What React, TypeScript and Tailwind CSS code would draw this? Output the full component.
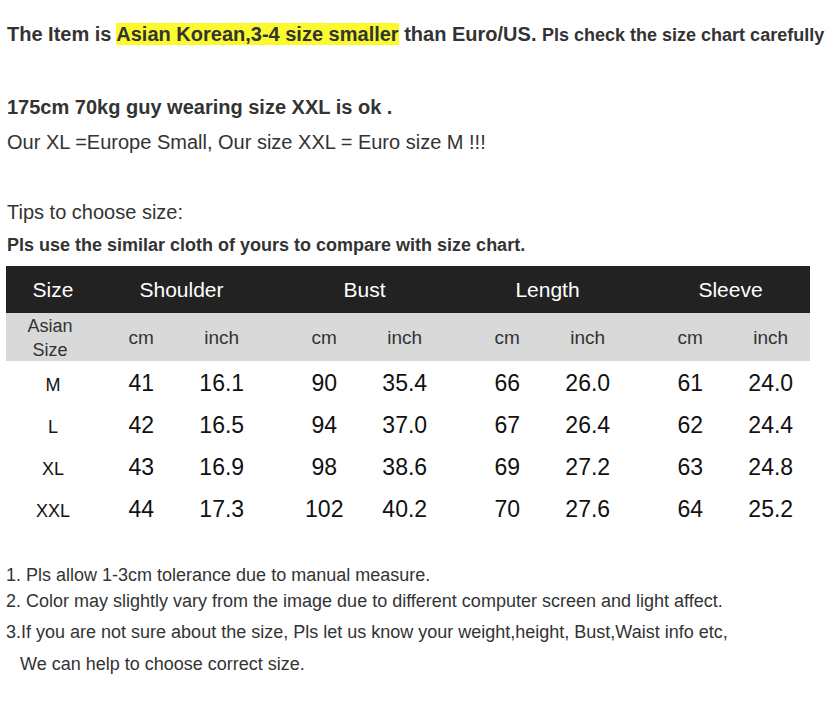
const rows = [
  ["M", "41", "16.1", "90", "35.4", "66", "26.0", "61", "24.0"],
  ["L", "42", "16.5", "94", "37.0", "67", "26.4", "62", "24.4"],
  ["XL", "43", "16.9", "98", "38.6", "69", "27.2", "63", "24.8"],
  ["XXL", "44", "17.3", "102", "40.2", "70", "27.6", "64", "25.2"],
];

const groups = ["Shoulder", "Bust", "Length", "Sleeve"];

// one row of the chart: size cell, then 4 measurement groups of cm / inch
function Row({ first, vals, className }: { first: React.ReactNode; vals: string[]; className: string }) {
  return (
    <div className={`flex w-[804px] overflow-hidden items-center ${className}`}>
      <div className="w-[84px] shrink-0 pl-[10px]">{first}</div>
      {[0, 1, 2, 3].map((g) => (
        <div key={g} className="w-[183px] shrink-0 grid grid-cols-2 px-[11px]">
          <span>{vals[g * 2]}</span>
          <span>{vals[g * 2 + 1]}</span>
        </div>
      ))}
    </div>
  );
}

export default function App() {
  return (
    <div className="w-[825px] h-[702px] bg-white text-[#333] font-['Liberation_Sans',Arial,sans-serif] overflow-hidden">
      <div className="pl-[7px] pt-[21px]">
        <p className="leading-[26px] font-bold text-[20px] whitespace-nowrap">
          The Item is <span className="bg-[#fafa2e]">Asian Korean,3-4 size smaller</span> than Euro/US.{" "}
          <span className="text-[18px]">Pls check the size chart carefully</span>
        </p>
        <p className="mt-[45px] leading-[28px] font-bold text-[20px]">175cm 70kg guy wearing size XXL is ok .</p>
        <p className="mt-[7px] leading-[28px] text-[20px]">Our XL =Europe Small, Our size XXL = Euro size M !!!</p>
        <p className="mt-[42px] leading-[28px] text-[20px]">Tips to choose size:</p>
        <p className="mt-[7px] leading-[24px] font-bold text-[18px]">Pls use the similar cloth of yours to compare with size chart.</p>
      </div>

      <div className="ml-[6px] mt-[9px] w-[804px] text-center">
        <div className="flex w-[804px] overflow-hidden h-[47px] items-center bg-[#222] text-white text-[21px]">
          <div className="w-[84px] shrink-0 pl-[10px]">Size</div>
          {groups.map((g) => (
            <div key={g} className="w-[183px] shrink-0">
              {g}
            </div>
          ))}
        </div>
        <Row
          className="h-[48px] pt-[2px] bg-[#d9d9d9] text-[19px]"
          first={
            <span className="block leading-[24px] text-[18px] pr-[6px]">
              Asian
              <br />
              Size
            </span>
          }
          vals={["cm", "inch", "cm", "inch", "cm", "inch", "cm", "inch"]}
        />
        <div className="pt-[1px]">
          {rows.map((r) => (
            <Row
              key={r[0]}
              className="h-[42px] text-[23px] text-[#111]"
              first={<span className="text-[18px]">{r[0]}</span>}
              vals={r.slice(1)}
            />
          ))}
        </div>
      </div>

      <div className="pl-[6px] mt-[32px] text-[18px] leading-[26px]">
        <p>1. Pls allow 1-3cm tolerance due to manual measure.</p>
        <p>2. Color may slightly vary from the image due to different computer screen and light affect.</p>
        <p className="mt-[5px]">3.If you are not sure about the size, Pls let us know your weight,height, Bust,Waist info etc,</p>
        <p className="mt-[6px] pl-[14px]">We can help to choose correct size.</p>
      </div>
    </div>
  );
}
